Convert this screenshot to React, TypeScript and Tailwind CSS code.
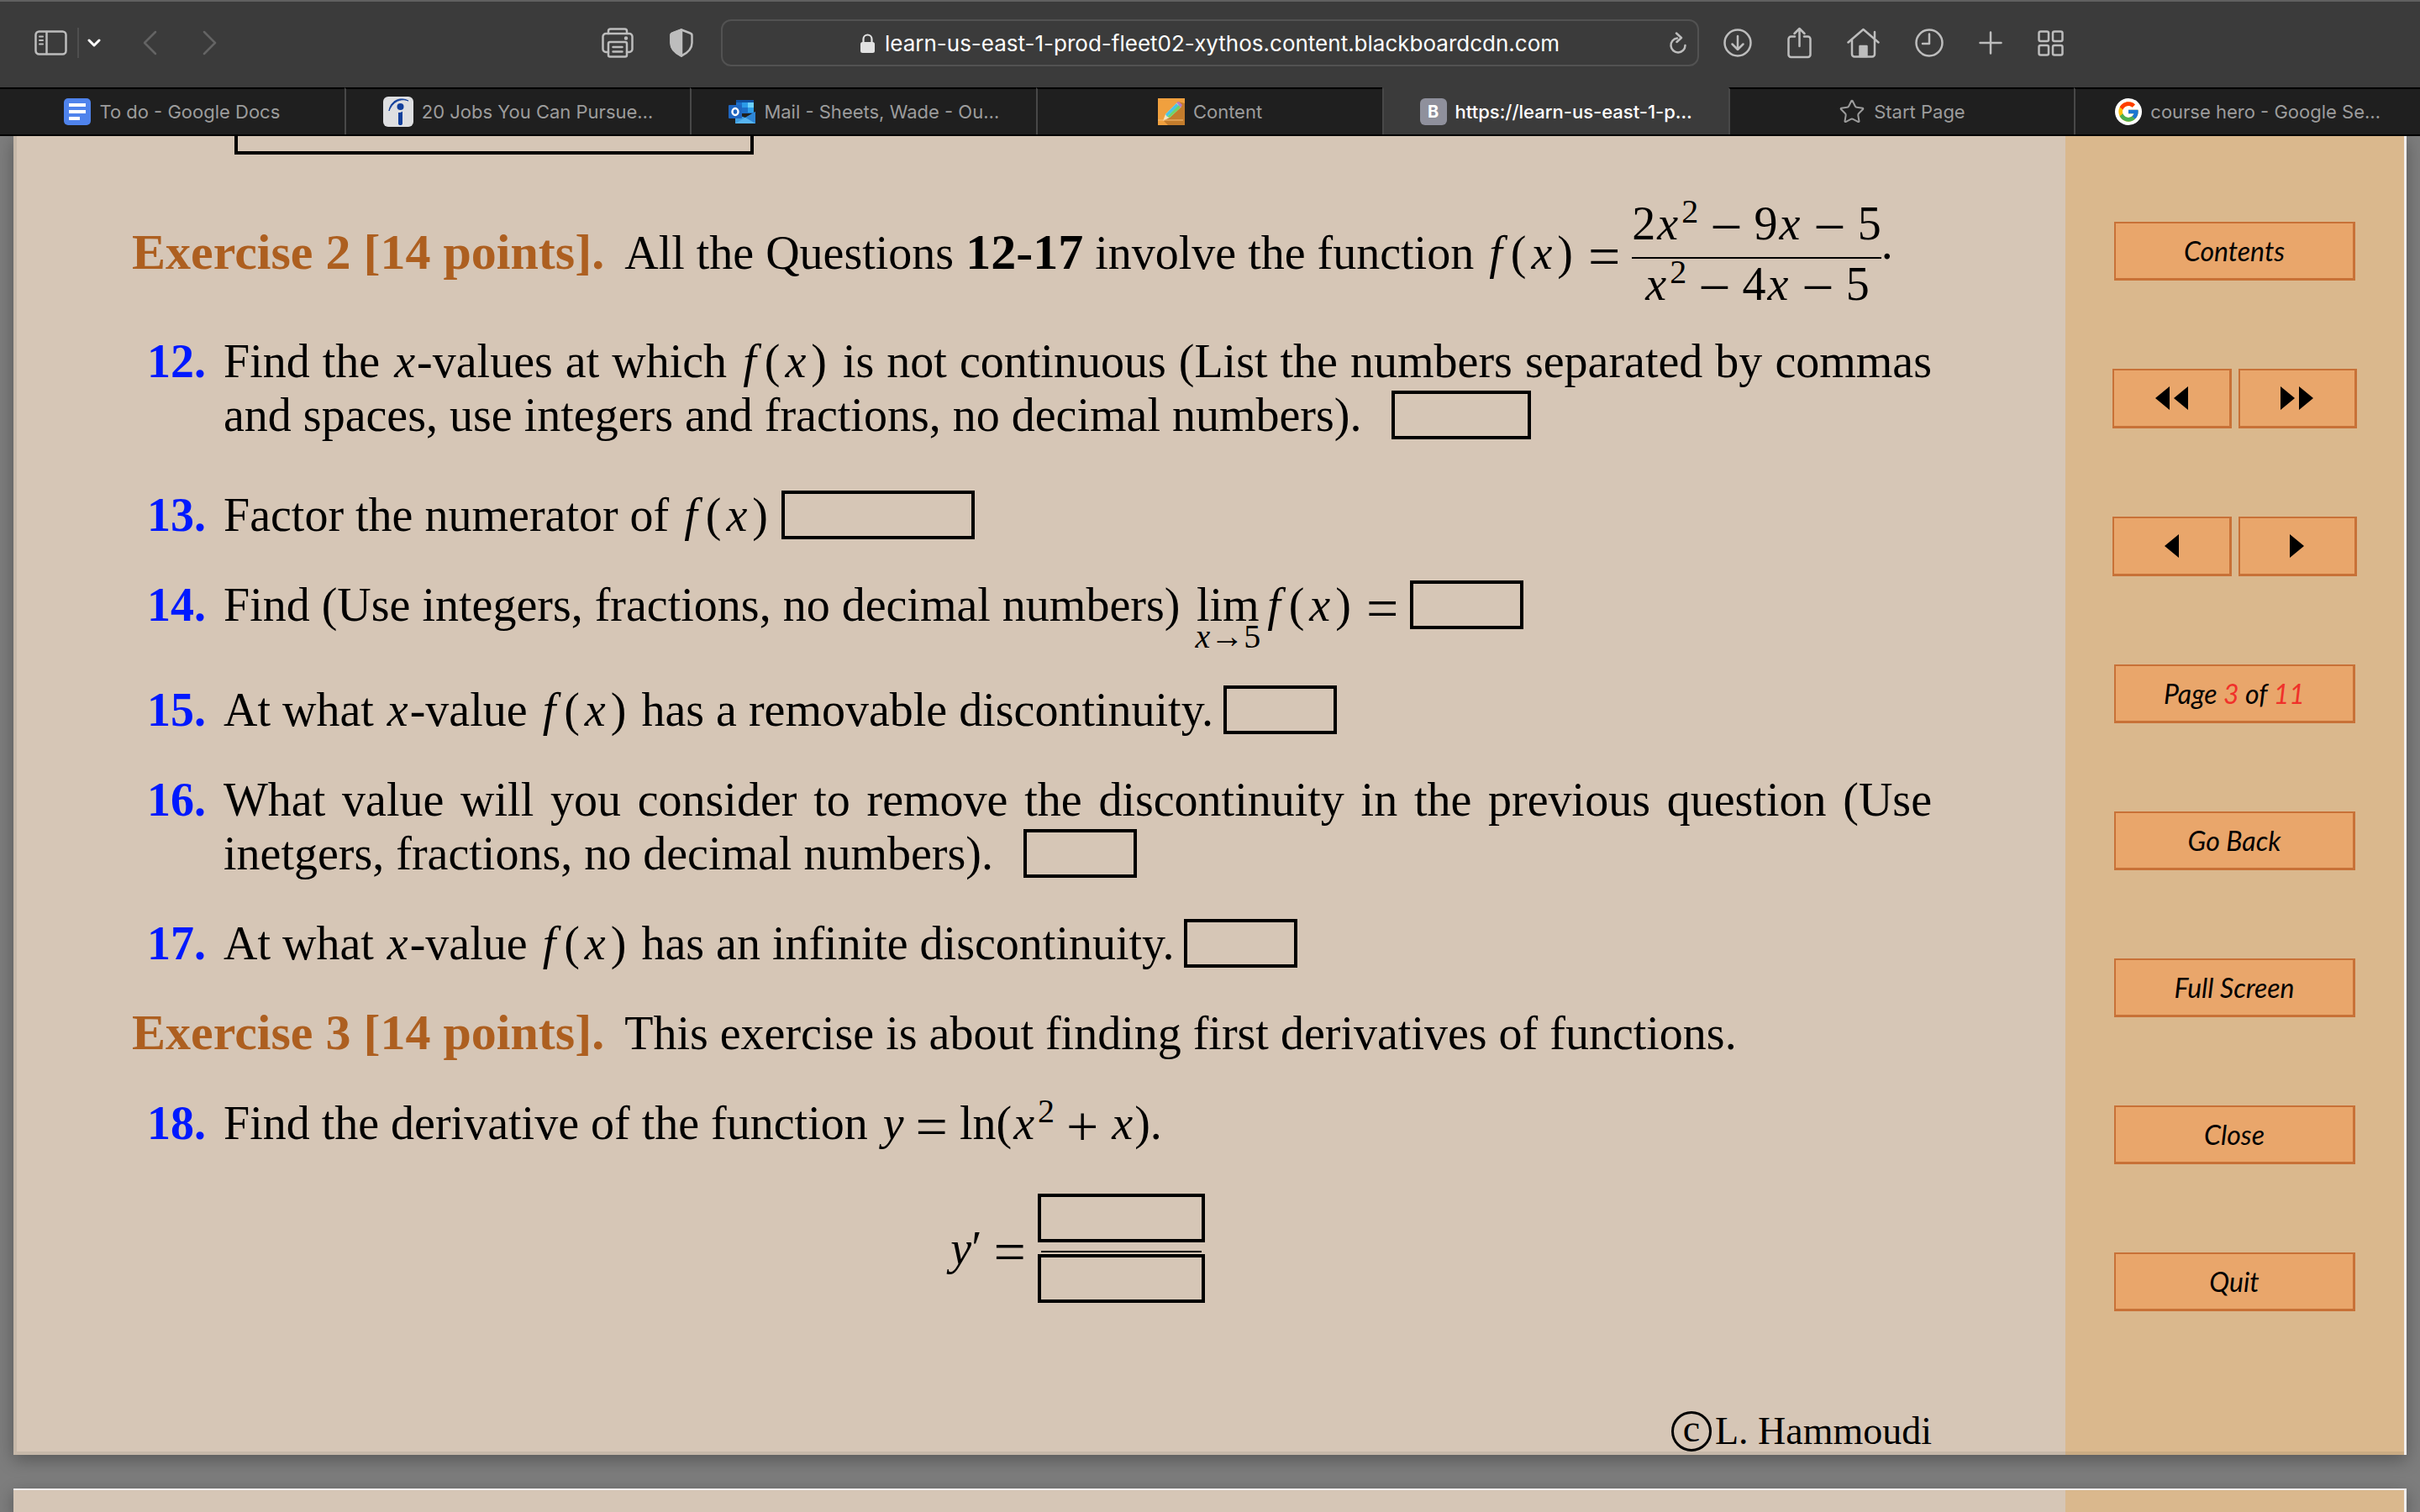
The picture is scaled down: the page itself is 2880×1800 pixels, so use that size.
import React from "react";
import clsx from "clsx";
import { FcGoogle } from "react-icons/fc";
import { Star } from "lucide-react";

const DocsIcon = () => (
  <svg viewBox="0 0 32 32" className="size-8 shrink-0">
    <rect width="32" height="32" rx="5" fill="#4f83ec" />
    <path d="M6 8h20M6 16h20M6 24h13" stroke="#fff" strokeWidth="4" />
  </svg>
);

const JobsIcon = () => (
  <svg viewBox="0 0 36 36" className="size-9 shrink-0">
    <rect width="36" height="36" rx="6" fill="#dedfe1" />
    <circle cx="20.5" cy="12" r="4" fill="#123f9b" />
    <path d="M18 19c2 0 4-.5 5-1.500V32c0 1.500-1 2-2.500 2S18 33.500 18 32z" fill="#123f9b" />
    <path d="M7 17C8 7 18-1 30 5C20 1 11 7 7 17z" fill="#123f9b" stroke="#123f9b" strokeWidth="1" />
  </svg>
);

const OutlookIcon = () => (
  <svg viewBox="0 0 32 28" className="h-7 w-8 shrink-0">
    <rect x="9" width="21" height="16" fill="#1d6fc8" />
    <path d="M9 0h21v3H9z" fill="#0f4f9f" />
    <path d="M16 3h7v6h-7z" fill="#2b9be8" />
    <path d="M23 3h7v6h-7z" fill="#6bd0fb" />
    <path d="M23 9h7v6h-7z" fill="#2f9fe9" />
    <path d="M8 17l12 4 12-7v14H8z" fill="#3f9fe3" />
    <path d="M20 21l12-7v14z" fill="#2e86d6" />
    <path d="M8 28l12-7 12 7z" fill="#57b4f0" />
    <rect y="6" width="16" height="16" rx="1" fill="#1f66c0" />
    <ellipse cx="8" cy="14" rx="3.500" ry="4" fill="none" stroke="#fff" strokeWidth="2.400" />
  </svg>
);

const PencilIcon = () => (
  <svg viewBox="0 0 32 32" className="size-8 shrink-0">
    <rect width="32" height="32" fill="#f0a03e" />
    <path d="M32 6v26H12l-5-5L24 4z" fill="#c37c2c" />
    <path d="M6 27l3-8L23 5l5 5-14 13z" fill="#f5e3c0" />
    <path d="M9 19L22 6l3 3L11 22z" fill="#49c4e8" />
    <path d="M11 22L25 8l2 3-13 12z" fill="#6fd36a" />
    <path d="M22 5l3-1 4 4-2 3z" fill="#b37cc8" />
    <path d="M0 26h30" stroke="#f7bd75" strokeWidth="1" />
  </svg>
);

const BlackboardIcon = () => (
  <span className="flex size-8 shrink-0 items-center justify-center rounded-md bg-[#8f909c] text-xl font-bold text-white">
    B
  </span>
);

const tabs = [
  { title: "To do - Google Docs", icon: <DocsIcon /> },
  { title: "20 Jobs You Can Pursue…", icon: <JobsIcon /> },
  { title: "Mail - Sheets, Wade - Ou…", icon: <OutlookIcon /> },
  { title: "Content", icon: <PencilIcon /> },
  { title: "https://learn-us-east-1-p…", icon: <BlackboardIcon />, active: true },
  { title: "Start Page", icon: <Star className="size-8 shrink-0" strokeWidth={1.5} /> },
  {
    title: "course hero - Google Se…",
    icon: (
      <span className="flex size-8 shrink-0 items-center justify-center rounded-full bg-white">
        <FcGoogle className="size-7" />
      </span>
    ),
  },
];

type IconButtonProps = {
  label: string;
  box: string;
  className: string;
  children: React.ReactNode;
};

const IconButton = ({ label, box, className, children }: IconButtonProps) => (
  <button type="button" aria-label={label} className="shrink-0">
    <svg
      viewBox={box}
      className={className}
      fill="none"
      stroke="currentColor"
      strokeWidth="2.500"
      strokeLinecap="round"
      strokeLinejoin="round"
    >
      {children}
    </svg>
  </button>
);

const Toolbar = () => (
  <div className="flex h-[104px] items-center border-t-2 border-[#606060] bg-[#3b3b3b] pr-[424px] pb-1 pl-[41px] text-[#bdbdbd]">
    <div className="flex w-[675px] shrink-0 items-center">
      <IconButton label="Sidebar" box="0 0 39 30" className="h-[30px] w-[39px]">
        <rect x="1.500" y="1.500" width="36" height="27" rx="4" />
        <path d="M14.500 2v26" />
        <path d="M6 7.500h4M6 12h4M6 16.500h4" strokeWidth="2" />
      </IconButton>
      <span className="ml-3 h-9 w-0.5 bg-[#4f4f4f]" />
      <div className="ml-2.5 flex text-white">
        <IconButton label="Tab groups" box="0 0 16 12" className="h-3 w-4">
          <path d="M2 3l6 6 6-6" strokeWidth="3" />
        </IconButton>
      </div>
      <div className="ml-[50px] flex gap-[54px] text-[#646464]">
        <IconButton label="Back" box="0 0 17 30" className="h-[30px] w-[17px]">
          <path d="M15 2L2 15l13 13" />
        </IconButton>
        <IconButton label="Forward" box="0 0 17 30" className="h-[30px] w-[17px]">
          <path d="M2 2l13 13L2 28" />
        </IconButton>
      </div>
    </div>
    <IconButton label="Print" box="0 0 38 36" className="h-9 w-[38px]">
      <path d="M8 7V4a2.500 2.500 0 0 1 2.500-2.500h17A2.500 2.500 0 0 1 30 4v3" />
      <path d="M8 29H5a3.500 3.500 0 0 1-3.500-3.500V10.500A3.500 3.500 0 0 1 5 7h28a3.500 3.500 0 0 1 3.500 3.500v15A3.500 3.500 0 0 1 33 29h-3" />
      <rect x="8" y="17" width="22" height="17.500" rx="2" />
      <path d="M13.500 23h11M13.500 28.500h11" />
      <circle cx="29" cy="12.500" r="1" fill="currentColor" />
    </IconButton>
    <div className="ml-[43px] flex">
      <IconButton label="Privacy report" box="0 0 28 34" className="h-[34px] w-7">
        <path d="M14 1.500l10.500 4a3 3 0 0 1 2 3V17c0 7-5 12-12.500 15.500C6.500 29 1.500 24 1.500 17V8.500a3 3 0 0 1 2-3z" />
        <path d="M14 1.500v31C6.500 29 1.500 24 1.500 17V8.500a3 3 0 0 1 2-3z" fill="currentColor" />
      </IconButton>
    </div>
    <div className="ml-[33px] flex h-14 flex-1 items-center rounded-xl border-2 border-[#525252] pr-3 pl-[34px]">
      <div className="flex flex-1 items-center justify-center gap-3 text-[26px] text-white">
        <svg viewBox="0 0 17 23" className="h-[23px] w-[17px] shrink-0 text-[#e2e2e2]">
          <rect y="10" width="17" height="13" rx="2.500" fill="currentColor" />
          <path d="M3.500 11V6.500a5 5 0 0 1 10 0V11" fill="none" stroke="currentColor" strokeWidth="2.200" />
        </svg>
        <span>learn-us-east-1-prod-fleet02-xythos.content.blackboardcdn.com</span>
      </div>
      <IconButton label="Reload" box="0 0 22 26" className="h-[26px] w-[22px]">
        <path d="M10 7.500a8.500 8.500 0 1 0 9.500 8.500" />
        <path d="M9 1.500l6 5.500-5.500 5" />
      </IconButton>
    </div>
    <div className="ml-[29px] flex items-center gap-[42px]">
      <IconButton label="Downloads" box="0 0 34 34" className="size-[34px]">
        <circle cx="17" cy="17" r="15.500" />
        <path d="M17 9v16M10.500 18.500L17 25l6.500-6.500" />
      </IconButton>
      <IconButton label="Share" box="0 0 29 38" className="h-[38px] w-[29px]">
        <path d="M9 11.500H4.500a3 3 0 0 0-3 3V33a3 3 0 0 0 3 3h20a3 3 0 0 0 3-3V14.500a3 3 0 0 0-3-3H20" />
        <path d="M14.500 23V2M8.500 8l6-6 6 6" />
      </IconButton>
      <IconButton label="Home" box="0 0 39 36" className="h-9 w-[39px]">
        <path d="M1.500 17.500L19.500 2l18 15.500" />
        <path d="M6 14.500V31.500a3 3 0 0 0 3 3h21a3 3 0 0 0 3-3V14.500M33 12V5" />
        <path d="M15.500 34V22h8v12z" fill="currentColor" />
      </IconButton>
      <IconButton label="History" box="0 0 34 34" className="size-[34px]">
        <circle cx="17" cy="17" r="15.500" />
        <path d="M17 6.500V18H9" />
      </IconButton>
      <IconButton label="New tab" box="0 0 28 28" className="size-7">
        <path d="M14 1.500v25M1.500 14h25" />
      </IconButton>
      <IconButton label="Tab overview" box="0 0 31 31" className="size-[31px]">
        <rect x="1.500" y="1.500" width="11.500" height="11.500" rx="2" />
        <rect x="18" y="1.500" width="11.500" height="11.500" rx="2" />
        <rect x="1.500" y="18" width="11.500" height="11.500" rx="2" />
        <rect x="18" y="18" width="11.500" height="11.500" rx="2" />
      </IconButton>
    </div>
  </div>
);

const TabBar = () => (
  <div className="flex h-[58px] border-b-2 border-black">
    {tabs.map((tab, index) => (
      <button
        key={tab.title}
        type="button"
        className={clsx(
          "flex min-w-0 flex-1 items-center justify-center gap-2.5 border-t-2 text-[22px] whitespace-nowrap",
          index > 0 && "border-l-2 border-l-[#484848]",
          tab.active
            ? "border-t-[#3b3b3b] bg-[#3b3b3b] font-medium text-white"
            : "border-t-black bg-[#1f1f1f] text-[#9c9c9c]"
        )}
      >
        {tab.icon}
        <span>{tab.title}</span>
      </button>
    ))}
  </div>
);

const Answer = ({ label, className }: { label: string; className: string }) => (
  <input
    type="text"
    aria-label={label}
    className={clsx("inline-block h-[58px] border-4 border-black bg-transparent", className)}
  />
);

const X = () => <i className="mx-0.5">x</i>;

const Fx = () => (
  <span className="mx-1 whitespace-nowrap">
    <i className="mr-2.5">f</i>(<i className="mx-1.5">x</i>)
  </span>
);

const Op = ({ children }: { children: React.ReactNode }) => (
  <span className="mx-3.5 align-[-8px] text-[68px] leading-[40px]">{children}</span>
);

const Sq = () => <span className="relative -top-5 ml-0.5 text-[40px] leading-none">2</span>;

const Question = ({
  number,
  className,
  children,
}: {
  number: number;
  className?: string;
  children: React.ReactNode;
}) => (
  <li className={clsx("flex", className)}>
    <span className="w-[91px] shrink-0 font-bold text-[#0019ff]">{number}.</span>
    <div className="flex-1 text-justify">{children}</div>
  </li>
);

const ExerciseTitle = ({ children }: { children: React.ReactNode }) => (
  <b className="mr-6 text-[60px] leading-none text-[#ad5f20]">{children}</b>
);

const Worksheet = () => (
  <main className="flex min-w-0 flex-1 flex-col bg-[#d6c6b6] pr-[159px] pb-1 pl-[141px] font-['Liberation_Serif',serif] text-[56px] leading-[64px] text-black shadow-[inset_4px_-4px_0_rgba(0,0,0,0.07)]">
    <input
      type="text"
      aria-label="Question 11"
      className="ml-[122px] h-[22px] w-[618px] border-4 border-t-0 border-black bg-transparent"
    />
    <h2 className="mt-[50px] flex items-center whitespace-nowrap">
      <span>
        <ExerciseTitle>Exercise 2 [14 points].</ExerciseTitle>
        All the Questions <b className="text-[60px] leading-none">12-17</b> involve the function{" "}
        <Fx />
        <Op>=</Op>
      </span>
      <span className="flex flex-col text-center">
        <span className="border-b-2 border-black pb-2">
          2<X />
          <Sq />
          <Op>−</Op>9<X />
          <Op>−</Op>5
        </span>
        <span className="leading-[60px]">
          <X />
          <Sq />
          <Op>−</Op>4<X />
          <Op>−</Op>5
        </span>
      </span>
      <span className="pb-6">.</span>
    </h2>

    <ol className="mt-[30px] flex flex-col gap-[43px] pl-[18px]">
      <Question number={12} className="mb-3">
        Find the <X />
        -values at which <Fx /> is not continuous (List the numbers separated by commas{" "}
        <span>and spaces, use integers and fractions, no decimal numbers).</span>
        <Answer label="Question 12" className="ml-9 w-[166px]" />
      </Question>
      <Question number={13}>
        Factor the numerator of <Fx />
        <Answer label="Question 13" className="ml-3 w-[230px]" />
      </Question>
      <Question number={14}>
        Find (Use integers, fractions, no decimal numbers){" "}
        <span className="mx-1 inline-flex flex-col text-center leading-[52px]">
          lim
          <span className="text-[40px] leading-6">
            <i>x</i>→5
          </span>
        </span>
        <Fx />
        <Op>=</Op>
        <Answer label="Question 14" className="w-[135px]" />
      </Question>
      <Question number={15}>
        At what <X />
        -value <Fx /> has a removable discontinuity.
        <Answer label="Question 15" className="ml-3 w-[135px]" />
      </Question>
      <Question number={16}>
        What value will you consider to remove the discontinuity in the previous question (Use
        inetgers, fractions, no decimal numbers).
        <Answer label="Question 16" className="ml-9 w-[135px]" />
      </Question>
      <Question number={17}>
        At what <X />
        -value <Fx /> has an infinite discontinuity.
        <Answer label="Question 17" className="ml-3 w-[135px]" />
      </Question>
    </ol>

    <h2 className="mt-[43px]">
      <ExerciseTitle>Exercise 3 [14 points].</ExerciseTitle>
      This exercise is about finding first derivatives of functions.
    </h2>

    <ol className="mt-[43px] pl-[18px]">
      <Question number={18}>
        Find the derivative of the function <i className="ml-1">y</i>
        <Op>=</Op>ln(
        <X />
        <Sq />
        <Op>+</Op>
        <X />
        ).
        <div className="mt-[52px] flex items-center justify-center">
          <span>
            <i>y</i>′<Op>=</Op>
          </span>
          <span className="flex w-[199px] flex-col">
            <Answer label="Derivative numerator" className="w-full" />
            <span className="mx-1 mt-2.5 mb-0.5 h-0.5 bg-black" />
            <Answer label="Derivative denominator" className="w-full" />
          </span>
        </div>
      </Question>
    </ol>

    <footer className="mt-auto flex items-center justify-end text-[46px] leading-[48px]">
      <span className="mr-1 flex size-12 items-center justify-center rounded-full border-3 border-black leading-none">
        <span className="pb-1.5">c</span>
      </span>
      L. Hammoudi
    </footer>
  </main>
);

const NavButton = ({
  label,
  className,
  children,
}: {
  label?: string;
  className?: string;
  children: React.ReactNode;
}) => (
  <button
    type="button"
    aria-label={label}
    className={clsx(
      "flex items-center justify-center border-2 border-r-3 border-b-3 border-[#c87137] bg-[#e9a66b]",
      className
    )}
  >
    {children}
  </button>
);

const Triangle = ({ left }: { left?: boolean }) => (
  <svg viewBox="0 0 17 28" className="h-7 w-[17px]">
    <path d={left ? "M17 0v28L0 14z" : "M0 0v28l17-14z"} fill="#000" />
  </svg>
);

const PageNav = () => (
  <nav className="flex w-[403px] shrink-0 flex-col gap-[105px] bg-[#dab88d] px-14 pt-[102px] font-[Lato,sans-serif] text-[32px] text-black italic shadow-[inset_0_-4px_0_rgba(0,0,0,0.07)]">
    <NavButton className="mx-0.5 h-[70px]">Contents</NavButton>
    <div className="flex gap-2">
      <NavButton label="First page" className="h-[71px] flex-1 gap-[5px]">
        <Triangle left />
        <Triangle left />
      </NavButton>
      <NavButton label="Last page" className="h-[71px] flex-1 gap-[5px]">
        <Triangle />
        <Triangle />
      </NavButton>
    </div>
    <div className="flex gap-2">
      <NavButton label="Previous page" className="h-[71px] flex-1">
        <Triangle left />
      </NavButton>
      <NavButton label="Next page" className="h-[71px] flex-1">
        <Triangle />
      </NavButton>
    </div>
    <NavButton className="mx-0.5 h-[70px]">
      <span>
        Page <span className="text-[#f0312a]">3</span> of{" "}
        <span className="text-[#f0312a]">11</span>
      </span>
    </NavButton>
    <NavButton className="mx-0.5 h-[70px]">Go Back</NavButton>
    <NavButton className="mx-0.5 h-[70px]">Full Screen</NavButton>
    <NavButton className="mx-0.5 h-[70px]">Close</NavButton>
    <NavButton className="mx-0.5 h-[70px]">Quit</NavButton>
  </nav>
);

export default function App() {
  return (
    <div className="flex h-screen flex-col overflow-hidden bg-[#7d7d7d] font-[Inter,sans-serif]">
      <header className="relative z-10 shrink-0">
        <Toolbar />
        <TabBar />
      </header>
      <div className="flex flex-1 flex-col gap-10 pr-4 pl-4">
        <div className="flex flex-1 border-r-3 border-[#f1eeee] shadow-[0_6px_20px_rgba(0,0,0,0.3)]">
          <Worksheet />
          <PageNav />
        </div>
        <div className="flex h-7 shrink-0 border-t-2 border-r-3 border-[#f1eeee] shadow-[0_6px_20px_rgba(0,0,0,0.3)]">
          <div className="flex-1 bg-[#d6c6b6]" />
          <div className="w-[403px] bg-[#dab88d]" />
        </div>
      </div>
    </div>
  );
}
